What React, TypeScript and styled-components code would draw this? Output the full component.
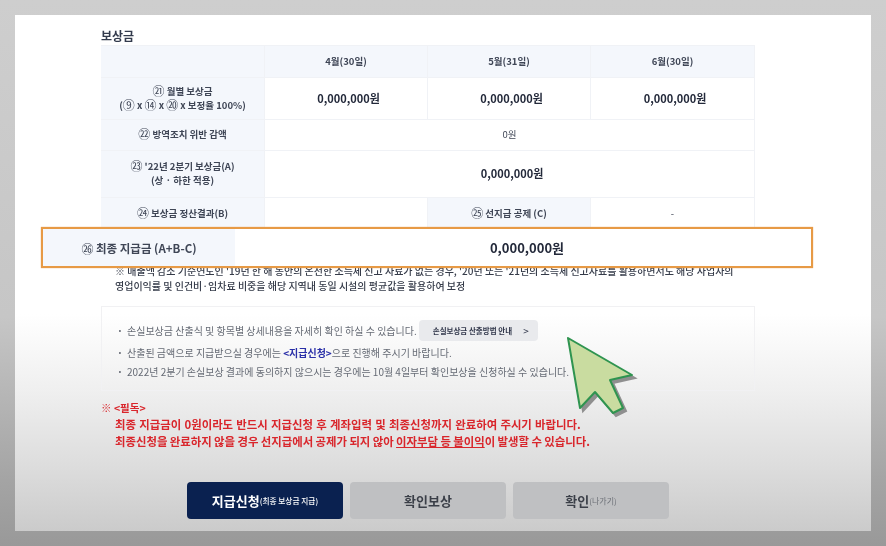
import styled, { createGlobalStyle } from 'styled-components';

const GlobalStyle = createGlobalStyle`
  html, body {
    margin: 0;
    padding: 0;
    width: 886px;
    height: 546px;
    overflow: hidden;
    font-family: "Noto Sans CJK KR", "Noto Sans", sans-serif;
  }
`;

const Screen = styled.div`
  width: 886px;
  height: 546px;
  box-sizing: border-box;
  padding: 15px;
  background: linear-gradient(180deg, #cecece 0%, #c6c6c6 58%, #a4a4a4 88%, #999 100%);
`;

const Panel = styled.div`
  position: relative;
  width: 856px;
  height: 516px;
  box-sizing: border-box;
  padding: 13px 116px 0 86px;
  background: linear-gradient(180deg, #fff 0%, #fff 58%, #efefef 73%, #dcdcdc 88%, #cbcbcb 100%);
  overflow: hidden;
`;

const Content = styled.div`
  filter: blur(0.35px);
`;

const Title = styled.h2`
  margin: 0 0 1px;
  font-size: 12px;
  line-height: 16px;
  font-weight: 700;
  color: #333b4d;
`;

const Table = styled.div`
  display: grid;
  grid-template-columns: 164px 163px 163px 164px;
  grid-template-rows: 32px 42px 31px 47px 32px 33px;
  border-top: 1px solid #f0f2f6;
  border-right: 1px solid #f0f2f6;
`;

const Cell = styled.div<{ $head?: boolean; $span?: number }>`
  display: flex;
  align-items: center;
  justify-content: center;
  text-align: center;
  box-sizing: border-box;
  padding-bottom: 2px;
  grid-column: span ${(p) => p.$span ?? 1};
  background: ${(p) => (p.$head ? '#f4f7fc' : '#fff')};
  border-bottom: 1px solid #f0f2f6;
  border-right: 1px solid #f0f2f6;
  font-size: 9.5px;
  line-height: 14px;
  font-weight: ${(p) => (p.$head ? 600 : 400)};
  color: #3f4656;
`;

const Num = styled.span`
  font-size: 12px;
  line-height: 0;
  font-weight: 400;
  vertical-align: -1px;
`;

const Amount = styled.span`
  padding-left: 5px;
  font-size: 11px;
  font-weight: 700;
  color: #23293a;
`;

const Note = styled.p`
  margin: 0 0 0 14px;
  font-size: 10px;
  line-height: 15px;
  font-weight: 500;
  color: #353b49;
  white-space: nowrap;
`;

const InfoBox = styled.div`
  margin-top: 13px;
  height: 85px;
  box-sizing: border-box;
  padding: 13px 0 0 15px;
  border: 1px solid #f1f1f3;
  display: flex;
  flex-direction: column;
`;

const InfoRow = styled.div<{ $height: number }>`
  display: flex;
  align-items: center;
  height: ${(p) => p.$height}px;
  font-size: 10px;
  color: #666b75;
  white-space: nowrap;

  &::before {
    content: '·';
    width: 10px;
    font-weight: 700;
  }
`;

const Strong = styled.b`
  color: #2a2fa8;
  font-weight: 700;
`;

const GuideButton = styled.button`
  display: flex;
  align-items: center;
  justify-content: space-between;
  box-sizing: border-box;
  width: 119px;
  height: 21px;
  margin-left: 2px;
  padding: 0 9px 0 14px;
  border: 0;
  border-radius: 4px;
  background: #e9eaed;
  font-family: inherit;
  font-size: 7.5px;
  font-weight: 700;
  color: #30364a;
`;

const Chevron = styled.span`
  font-size: 10px;
  font-weight: 400;
`;

const Warning = styled.div`
  margin-top: 8px;
  font-size: 11.4px;
  line-height: 17px;
  font-weight: 700;
  color: #d9262c;
  white-space: nowrap;
`;

const WarningHead = styled.div`
  font-size: 10.5px;
`;

const WarningLine = styled.div<{ $wordGap: number }>`
  padding-left: 14px;
  word-spacing: ${(p) => p.$wordGap}px;
`;

const Underlined = styled.span`
  text-decoration: underline;
`;

const Actions = styled.div`
  display: flex;
  gap: 7px;
  margin: 32px 0 0 86px;
`;

const ActionButton = styled.button<{ $primary?: boolean }>`
  display: flex;
  align-items: center;
  justify-content: center;
  width: 156px;
  height: 37px;
  border: 0;
  border-radius: 4px;
  padding: 0;
  font-family: inherit;
  font-size: 13px;
  font-weight: 700;
  background: ${(p) => (p.$primary ? '#0a2150' : '#bfc0c2')};
  color: ${(p) => (p.$primary ? '#fff' : '#3b3f48')};
`;

const Small = styled.span<{ $light?: boolean }>`
  font-size: ${(p) => (p.$light ? 8 : 7.7)}px;
  font-weight: ${(p) => (p.$light ? 400 : 500)};
  color: ${(p) => (p.$light ? '#6d7077' : 'inherit')};
`;

const Highlight = styled.div`
  position: absolute;
  left: 26px;
  top: 212px;
  width: 772px;
  height: 41px;
  box-sizing: border-box;
  display: flex;
  background: #fff;
  border: 2px solid #e79a45;
  box-shadow: 0 0 1px #e9a862;
  filter: blur(0.25px);
`;

const HighlightLabel = styled.div`
  display: flex;
  align-items: center;
  justify-content: center;
  width: 192px;
  background: #f4f7fc;
  font-size: 11.5px;
  font-weight: 600;
  color: #3f4656;
`;

const HighlightValue = styled.div`
  flex: 1;
  display: flex;
  align-items: center;
  justify-content: center;
  padding-left: 8px;
  font-size: 13px;
  font-weight: 700;
  color: #23293a;
`;

const Pointer = styled.svg`
  position: absolute;
  left: 548px;
  top: 318px;
`;

function CursorArrow() {
  const shape = '5,5 69,42 47,47 60,75 50,80 32,59 17,75';
  return (
    <Pointer width="80" height="90" viewBox="0 0 80 90">
      <polygon points={shape} transform="translate(3 3)" fill="#8f8f8f" stroke="#8f8f8f" strokeWidth="2" />
      <polygon points={shape} fill="#c9dca0" stroke="#2f9450" strokeWidth="2" strokeLinejoin="round" />
    </Pointer>
  );
}

const months = ['4월(30일)', '5월(31일)', '6월(30일)'];

export default function App() {
  return (
    <>
      <GlobalStyle />
      <Screen>
        <Panel>
          <Content>
            <Title>보상금</Title>
            <Table>
              <Cell $head />
              {months.map((m) => (
                <Cell $head key={m}>
                  {m}
                </Cell>
              ))}
              <Cell $head>
                <span>
                  <Num>㉑</Num> 월별 보상금
                  <br />(<Num>⑨</Num> x <Num>⑭</Num> x <Num>⑳</Num> x 보정율 100%)
                </span>
              </Cell>
              {months.map((m) => (
                <Cell key={m}>
                  <Amount>0,000,000원</Amount>
                </Cell>
              ))}
              <Cell $head>
                <span>
                  <Num>㉒</Num> 방역조치 위반 감액
                </span>
              </Cell>
              <Cell $span={3}>0원</Cell>
              <Cell $head>
                <span>
                  <Num>㉓</Num> '22년 2분기 보상금(A)
                  <br />
                  (상 · 하한 적용)
                </span>
              </Cell>
              <Cell $span={3}>
                <Amount>0,000,000원</Amount>
              </Cell>
              <Cell $head>
                <span>
                  <Num>㉔</Num> 보상금 정산결과(B)
                </span>
              </Cell>
              <Cell />
              <Cell $head>
                <span>
                  <Num>㉕</Num> 선지급 공제 (C)
                </span>
              </Cell>
              <Cell>-</Cell>
              <Cell $head />
              <Cell $span={3} />
            </Table>
            <Note>
              ※ 매출액 감소 기준연도인 '19년 한 해 동안의 온전한 소득세 신고 자료가 없는 경우, '20년 또는 '21년의 소득세 신고자료를 활용하면서도 해당 사업자의
              <br />
              영업이익률 및 인건비·임차료 비중을 해당 지역내 동일 시설의 평균값을 활용하여 보정
            </Note>
            <InfoBox>
              <InfoRow $height={21}>
                손실보상금 산출식 및 항목별 상세내용을 자세히 확인 하실 수 있습니다.
                <GuideButton>
                  손실보상금 산출방법 안내 <Chevron>&gt;</Chevron>
                </GuideButton>
              </InfoRow>
              <InfoRow $height={22}>
                <span>
                  산출된 금액으로 지급받으실 경우에는 <Strong>&lt;지급신청&gt;</Strong>으로 진행해 주시기 바랍니다.
                </span>
              </InfoRow>
              <InfoRow $height={17}>2022년 2분기 손실보상 결과에 동의하지 않으시는 경우에는 10월 4일부터 확인보상을 신청하실 수 있습니다.</InfoRow>
            </InfoBox>
            <Warning>
              <WarningHead>※ &lt;필독&gt;</WarningHead>
              <WarningLine $wordGap={0.7}>최종 지급금이 0원이라도 반드시 지급신청 후 계좌입력 및 최종신청까지 완료하여 주시기 바랍니다.</WarningLine>
              <WarningLine $wordGap={-0.2}>
                최종신청을 완료하지 않을 경우 선지급에서 공제가 되지 않아 <Underlined>이자부담 등 불이익</Underlined>이 발생할 수 있습니다.
              </WarningLine>
            </Warning>
            <Actions>
              <ActionButton $primary>
                지급신청<Small>(최종 보상금 지급)</Small>
              </ActionButton>
              <ActionButton>확인보상</ActionButton>
              <ActionButton>
                확인<Small $light>(나가기)</Small>
              </ActionButton>
            </Actions>
          </Content>
          <Highlight>
            <HighlightLabel>
              <span>
                <Num>㉖</Num> 최종 지급금 (A+B-C)
              </span>
            </HighlightLabel>
            <HighlightValue>0,000,000원</HighlightValue>
          </Highlight>
          <CursorArrow />
        </Panel>
      </Screen>
    </>
  );
}
